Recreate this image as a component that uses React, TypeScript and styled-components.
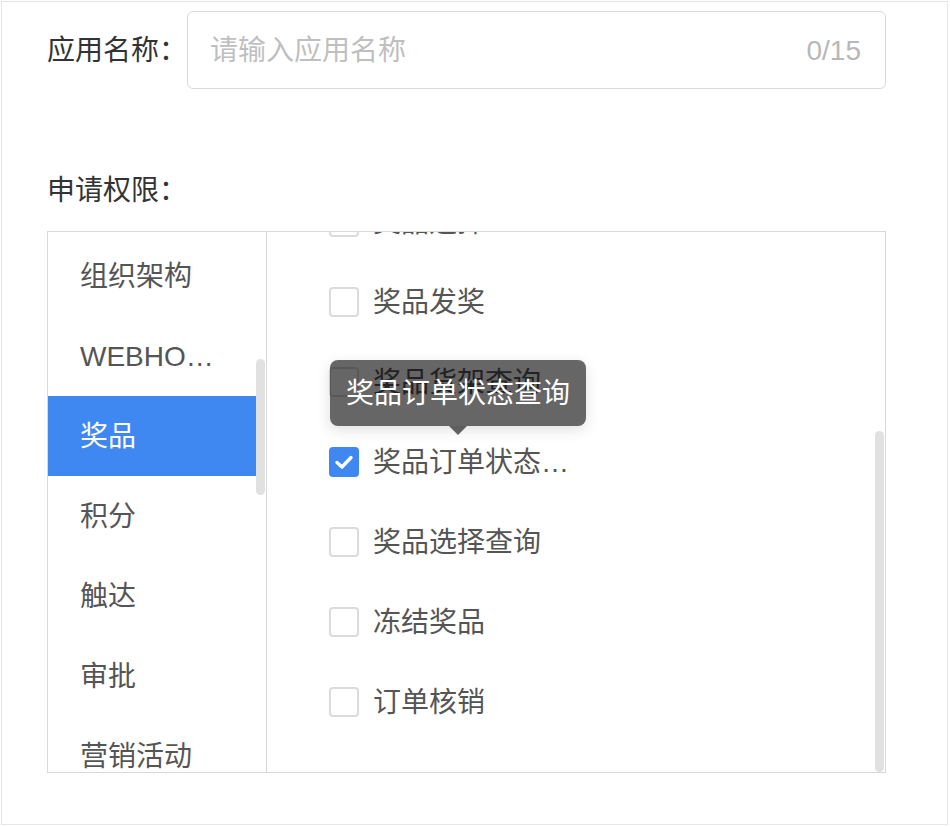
import React, { useLayoutEffect, useRef, useState } from "react";
import styled, { createGlobalStyle } from "styled-components";

const Global = createGlobalStyle`
  html, body { margin: 0; padding: 0; background: #fff; }
  body { font-family: "Liberation Sans", "Noto Sans CJK SC", sans-serif; }
  * { box-sizing: border-box; }
`;

const Page = styled.div`
  margin: 1px 0 0 1px;
  width: 947px;
  height: 824px;
  border: 1px solid #e6e6e6;
  padding: 9px 61px 0 45px;
  display: flex;
  flex-direction: column;
`;

const FormRow = styled.div`
  display: flex;
  align-items: center;
`;

const Label = styled.div`
  width: 140px;
  flex: none;
  font-size: 28px;
  line-height: 40px;
  color: #333;
  padding-top: 2px;
`;

const InputBox = styled.div`
  flex: 1;
  height: 78px;
  border: 1px solid #d9d9d9;
  border-radius: 6px;
  display: flex;
  align-items: center;
  padding: 2px 24px 0 22px;
`;

const TextInput = styled.input`
  flex: 1;
  border: none;
  outline: none;
  background: transparent;
  font-family: inherit;
  font-size: 28px;
  color: #333;
  padding: 0;
  &::placeholder { color: #bfbfbf; }
`;

const Count = styled.span`
  font-size: 28px;
  color: #b8b8b8;
`;

const SectionLabel = styled(Label)`
  margin-top: 80px;
`;

const Transfer = styled.div`
  margin-top: 20px;
  height: 542px;
  border: 1px solid #d9d9d9;
  display: flex;
`;

const Pane = styled.div<{ $w?: number; $divider?: boolean }>`
  display: flex;
  height: 100%;
  ${(p) => (p.$w ? `width: ${p.$w}px; flex: none;` : "flex: 1;")}
  ${(p) => (p.$divider ? "border-right: 1px solid #d9d9d9;" : "")}
`;

const ScrollArea = styled.div<{ $pl?: number }>`
  flex: 1;
  min-width: 0;
  height: 100%;
  overflow: hidden;
  padding: 24px 0 30px ${(p) => p.$pl ?? 0}px;
`;

const Track = styled.div`
  position: relative;
  width: 10px;
  flex: none;
  height: 100%;
`;

const Thumb = styled.div`
  position: absolute;
  left: 0;
  width: 9px;
  background: #e1e1e1;
  border-radius: 5px;
`;

const MenuItem = styled.div<{ $active?: boolean }>`
  height: 80px;
  line-height: 82px;
  padding: 0 32px;
  font-size: 28px;
  white-space: nowrap;
  overflow: hidden;
  text-overflow: ellipsis;
  color: ${(p) => (p.$active ? "#fff" : "#555")};
  background: ${(p) => (p.$active ? "#3f88f1" : "transparent")};
`;

const OptionRow = styled.div`
  height: 80px;
  display: flex;
  align-items: center;
`;

const CheckWrap = styled.label`
  position: relative;
  display: inline-flex;
  align-items: center;
  gap: 14px;
  height: 40px;
`;

const Box = styled.span<{ $checked?: boolean }>`
  width: 30px;
  height: 30px;
  flex: none;
  border-radius: 4px;
  border: 2px solid ${(p) => (p.$checked ? "#3f88f1" : "#dcdcdc")};
  background: ${(p) => (p.$checked ? "#3f88f1" : "#fff")};
  display: flex;
  align-items: center;
  justify-content: center;
`;

const OptionText = styled.span`
  max-width: 214px;
  font-size: 28px;
  line-height: 42px;
  padding-top: 2px;
  color: #555;
  white-space: nowrap;
  overflow: hidden;
  text-overflow: ellipsis;
`;

const Tooltip = styled.div`
  position: absolute;
  z-index: 10;
  bottom: calc(100% + 16px);
  left: 50%;
  transform: translateX(-50%);
  white-space: nowrap;
  background: rgba(0, 0, 0, 0.6);
  color: #fff;
  font-size: 28px;
  line-height: 42px;
  padding: 13px 16px 11px;
  border-radius: 8px;
  box-shadow: 0 4px 14px rgba(0, 0, 0, 0.12);
  &::after {
    content: "";
    position: absolute;
    top: 100%;
    left: 50%;
    margin-left: -9px;
    border: 9px solid transparent;
    border-bottom: none;
    border-top: 9px solid rgba(0, 0, 0, 0.6);
  }
`;

const menuItems = [
  "应用管理", "用户", "部门", "角色", "消息", "日志",
  "组织架构", "WEBHOOK", "奖品", "积分", "触达", "审批", "营销活动",
  "会员", "优惠券", "订单", "商品", "数据", "报表", "客户", "标签",
  "内容", "素材", "财务", "门店", "设置",
];

const options = [
  { name: "奖品查询" },
  { name: "奖品列表" },
  { name: "奖品库存查询" },
  { name: "奖品选择" },
  { name: "奖品发奖" },
  { name: "奖品货架查询" },
  { name: "奖品订单状态查询", checked: true, tip: true },
  { name: "奖品选择查询" },
  { name: "冻结奖品" },
  { name: "订单核销" },
];

const Check = () => (
  <svg width="22" height="22" viewBox="0 0 22 22" fill="none">
    <path d="M4 11.5 L9 16 L18 6.5" stroke="#fff" strokeWidth="3.4" strokeLinecap="round" strokeLinejoin="round" />
  </svg>
);

type ThumbPos = { top: number; height: number };

function useScrolled(initial: number) {
  const ref = useRef<HTMLDivElement>(null);
  const [thumb, setThumb] = useState<ThumbPos>({ top: 0, height: 0 });
  useLayoutEffect(() => {
    const el = ref.current;
    if (!el) return;
    el.scrollTop = initial;
    const ch = el.clientHeight;
    const sh = el.scrollHeight;
    setThumb({ top: (el.scrollTop / sh) * ch, height: (ch / sh) * ch });
  }, [initial]);
  return { ref, thumb };
}

export default function App() {
  const menu = useScrolled(500);
  const opts = useScrolled(10000);

  return (
    <>
      <Global />
      <Page>
        <FormRow>
          <Label>应用名称：</Label>
          <InputBox>
            <TextInput placeholder="请输入应用名称" />
            <Count>0/15</Count>
          </InputBox>
        </FormRow>
        <SectionLabel>申请权限：</SectionLabel>
        <Transfer>
          <Pane $w={219} $divider>
            <ScrollArea ref={menu.ref}>
              {menuItems.map((m) => (
                <MenuItem key={m} $active={m === "奖品"}>{m}</MenuItem>
              ))}
            </ScrollArea>
            <Track>
              <Thumb style={{ top: menu.thumb.top, height: menu.thumb.height }} />
            </Track>
          </Pane>
          <Pane>
            <ScrollArea ref={opts.ref} $pl={62}>
              {options.map((o) => (
                <OptionRow key={o.name}>
                  <CheckWrap>
                    <Box $checked={o.checked}>{o.checked && <Check />}</Box>
                    <OptionText>{o.name}</OptionText>
                    {o.tip && <Tooltip>{o.name}</Tooltip>}
                  </CheckWrap>
                </OptionRow>
              ))}
            </ScrollArea>
            <Track>
              <Thumb style={{ top: opts.thumb.top, height: opts.thumb.height }} />
            </Track>
          </Pane>
        </Transfer>
      </Page>
    </>
  );
}
